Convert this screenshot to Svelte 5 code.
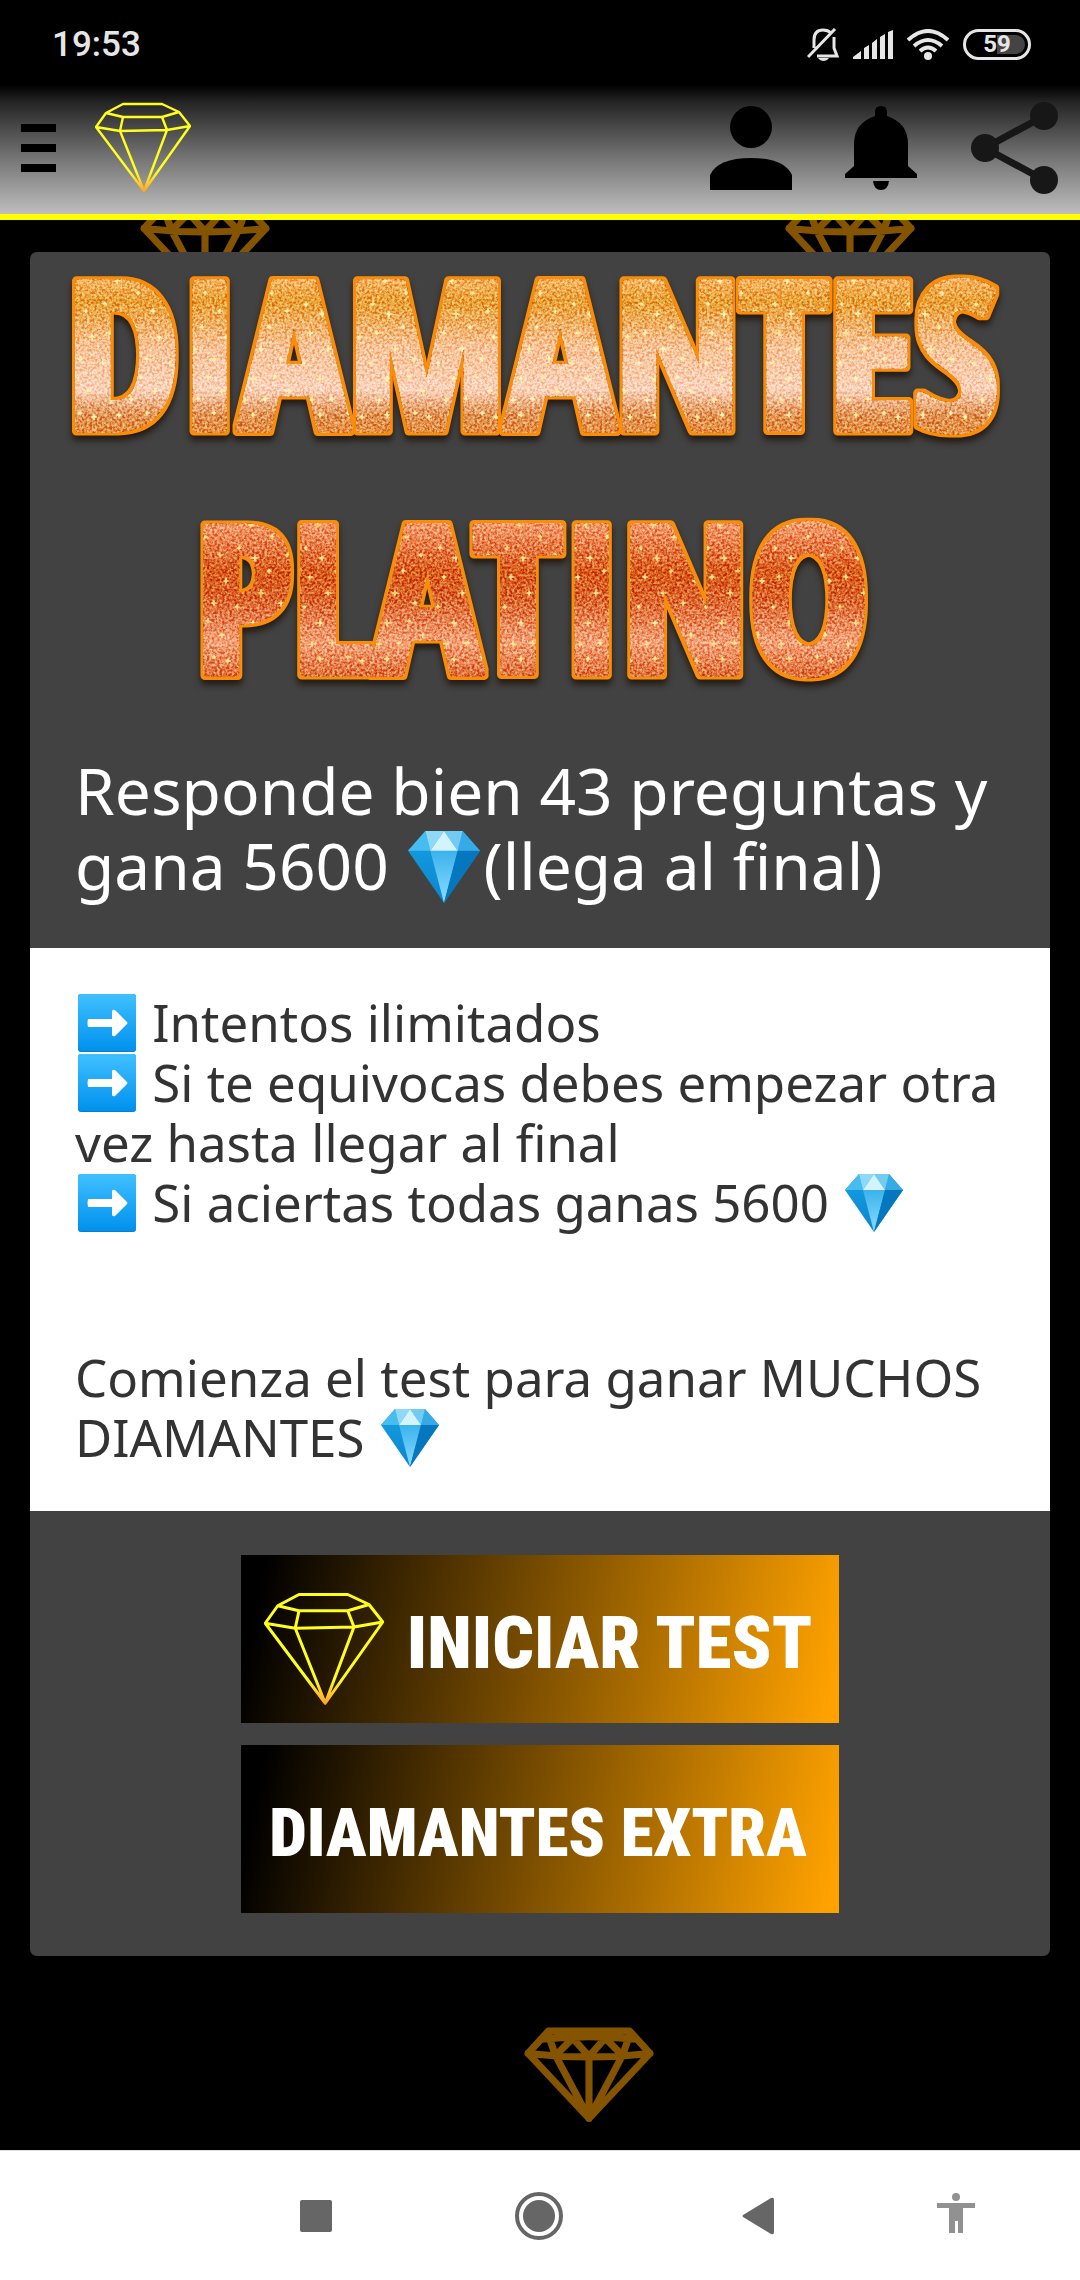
<script>
  const rules = [
    { text: 'Intentos ilimitados', gem: false },
    { text: 'Si te equivocas debes empezar otra vez hasta llegar al final', gem: false },
    { text: 'Si aciertas todas ganas 5600', gem: true }
  ];
  const sparks = [
    [20, 14, 4], [54, 8, 3], [41, 26, 3], [8, 37, 3], [24, 47, 5], [56, 44, 3], [38, 60, 3],
    [12, 66, 4], [62, 70, 4], [30, 82, 5], [50, 92, 4], [6, 96, 3], [22, 112, 5], [44, 110, 3],
    [58, 124, 4], [14, 133, 4], [34, 132, 4], [50, 146, 3], [22, 148, 4], [64, 150, 4]
  ];
  const spark = ([x, y, r]) =>
    `M${x} ${y - r}L${x + 1} ${y - 1}L${x + r} ${y}L${x + 1} ${y + 1}L${x} ${y + r}L${x - 1} ${y + 1}L${x - r} ${y}L${x - 1} ${y - 1}Z`;
</script>

{#snippet gem()}
  <svg class="emoji" viewBox="0 0 58 58" role="img" aria-label="diamante">
    <defs>
      <linearGradient id="gemBody" x1="0" y1="0" x2="0" y2="1">
        <stop offset="0" stop-color="#169ee2" /><stop offset="1" stop-color="#0a86d0" />
      </linearGradient>
      <linearGradient id="gemFace" x1="0" y1="0" x2="0" y2="1">
        <stop offset="0" stop-color="#3bb2ec" /><stop offset="1" stop-color="#8bdcff" />
      </linearGradient>
    </defs>
    <path d="M14 0H44L58 16L29 58L0 16Z" fill="url(#gemBody)" />
    <path d="M18 16H40L29 58Z" fill="url(#gemFace)" />
    <path d="M40 16H58L29 58Z" fill="#0577bf" />
    <path d="M14 0L0 16H18Z" fill="#46bcf1" />
    <path d="M44 0L58 16H40Z" fill="#35aae5" />
    <path d="M14 0H29L18 16Z" fill="#8ed9f8" />
    <path d="M44 0H29L40 16Z" fill="#72cbf2" />
    <path d="M29 0L40 16H18Z" fill="#d3f3fd" />
  </svg>
{/snippet}

{#snippet arrow()}
  <svg class="emoji" viewBox="0 0 58 58" role="img" aria-label="flecha">
    <defs>
      <linearGradient id="arrowTile" x1="0" y1="0" x2="0" y2="1">
        <stop offset="0" stop-color="#40c0ff" /><stop offset="1" stop-color="#0091ee" />
      </linearGradient>
    </defs>
    <rect width="58" height="58" rx="3" fill="#0b7cc6" />
    <rect width="58" height="57" rx="3" fill="url(#arrowTile)" />
    <path d="M10 25H34V17Q35 15 37 16L49 28Q50 29 49 30L37 42Q35 43 34 41V33H10Q9 29 10 25Z" fill="#fff" />
  </svg>
{/snippet}

{#snippet logo()}
  <svg viewBox="0 0 96 91" aria-hidden="true">
    <defs>
      <linearGradient id="logoLine" gradientUnits="userSpaceOnUse" x1="0" y1="70" x2="0" y2="90">
        <stop offset="0" stop-color="#ffff1e" /><stop offset="1" stop-color="#ff9d2e" />
      </linearGradient>
    </defs>
    <path
      d="M28 2H67L84 10L95 24L49 89L1 25L11 11ZM11 11L28 15H67L84 10M28 15L25 29L72 28L67 15M1 25L25 29L49 89L72 28L95 24"
      fill="none" stroke="url(#logoLine)" stroke-width="2.4" stroke-linejoin="round" />
  </svg>
{/snippet}

{#snippet wallGem()}
  <path
    d="M24 4H104L124 26L64 90L4 26ZM17 12Q64 7 111 12M4 26Q64 33 124 26M24 8L31 28L48 11L64 29L80 11L97 28L104 8M31 28L64 90L97 28M64 29V90"
    fill="none" stroke="#855400" stroke-width="7" stroke-linejoin="round" stroke-linecap="round" />
{/snippet}

<div class="screen">
  <div class="status">
    <time>19:53</time>
    <div class="indicators">
      <svg width="32" height="33" viewBox="0 0 32 33" aria-hidden="true">
        <g fill="none" stroke="#e6e6e6" stroke-width="3">
          <path d="M7 20V12Q7 2 16 2Q21 2 24 5M27 9V20L30 28H10M1 29L28 1" />
        </g>
        <path d="M11 30H22Q20 33 16 33Q13 33 11 30Z" fill="#e6e6e6" />
      </svg>
      <svg width="40" height="30" viewBox="0 0 40 30" aria-hidden="true" fill="#e6e6e6">
        <path d="M0 27L8 21V29H0ZM11 18L16 15V29H11ZM19 13L24 9V29H19ZM27 7L32 4V29H27ZM35 2L40 0V29H35Z" />
      </svg>
      <svg width="42" height="31" viewBox="0 0 42 31" aria-hidden="true">
        <g fill="none" stroke="#e6e6e6" stroke-width="4">
          <path d="M1 11Q21 -7 41 11M7 17Q21 5 35 17M13 22Q21 15 29 22" />
        </g>
        <circle cx="21" cy="27" r="4" fill="#e6e6e6" />
      </svg>
      <span class="battery">59</span>
    </div>
  </div>

  <header>
    <button class="menu" aria-label="Menú"><i></i><i></i><i></i></button>
    <a class="brand" href="#inicio" aria-label="Inicio">{@render logo()}</a>
    <nav class="tools" aria-label="Accesos">
      <button aria-label="Perfil">
        <svg width="82" height="84" viewBox="0 0 82 84" aria-hidden="true">
          <circle cx="41" cy="21" r="21" /><path d="M0 84V69Q8 52 41 52Q74 52 82 69V84Z" />
        </svg>
      </button>
      <button aria-label="Notificaciones">
        <svg width="72" height="84" viewBox="0 0 72 84" aria-hidden="true">
          <path d="M30 6Q30 0 36 0Q42 0 42 6V10Q63 17 63 38V60L72 68V72H0V68L9 60V38Q9 17 30 10ZM28 75H44Q43 84 36 84Q29 84 28 75Z" />
        </svg>
      </button>
      <button aria-label="Compartir">
        <svg width="89" height="94" viewBox="0 0 89 94" aria-hidden="true">
          <path d="M74 15L15 47L74 79" fill="none" stroke="#171717" stroke-width="7" />
          <g fill="#171717"><circle cx="74" cy="15" r="14" /><circle cx="15" cy="47" r="14" /><circle cx="74" cy="79" r="14" /></g>
        </svg>
      </button>
    </nav>
  </header>

  <main>
    <svg class="wall first" viewBox="0 0 128 94" aria-hidden="true">{@render wallGem()}</svg>
    <svg class="wall second" viewBox="0 0 128 94" aria-hidden="true">{@render wallGem()}</svg>
    <svg class="wall third" viewBox="0 0 128 94" aria-hidden="true">{@render wallGem()}</svg>

    <article>
      <h1>
        <svg viewBox="0 0 1020 500">
          <defs>
            <linearGradient id="gold" x1="0" y1="0" x2="0" y2="1">
              <stop offset="0" stop-color="#ffc27c" /><stop offset="0.2" stop-color="#e9a232" />
              <stop offset="0.45" stop-color="#f8c496" /><stop offset="0.7" stop-color="#fbd4bc" />
              <stop offset="0.85" stop-color="#e29450" /><stop offset="1" stop-color="#e88f38" />
            </linearGradient>
            <linearGradient id="copper" x1="0" y1="0" x2="0" y2="1">
              <stop offset="0" stop-color="#fcae80" /><stop offset="0.35" stop-color="#da5a18" />
              <stop offset="0.5" stop-color="#dc6428" /><stop offset="0.75" stop-color="#f5a478" />
              <stop offset="1" stop-color="#da6020" />
            </linearGradient>
            <pattern id="goldFill" patternUnits="userSpaceOnUse" x="0" y="15" width="67" height="175">
              <rect width="67" height="175" fill="url(#gold)" />
              {#each sparks as s}<path d={spark(s)} fill="#fff3b0" />{/each}
            </pattern>
            <pattern id="copperFill" patternUnits="userSpaceOnUse" x="0" y="259" width="67" height="175">
              <rect width="67" height="175" fill="url(#copper)" />
              {#each sparks as s}<path d={spark(s)} fill="#ffe48c" />{/each}
            </pattern>
            <filter id="glitter" filterUnits="userSpaceOnUse" x="0" y="0" width="1020" height="500" color-interpolation-filters="sRGB">
              <feTurbulence type="fractalNoise" baseFrequency="0.4" numOctaves="2" seed="4" />
              <feColorMatrix values="1.7 1.7 0 0 -1.2  1.7 1.7 0 0 -1.2  1.7 1.7 0 0 -1.2  0 0 0 0 1" result="grain" />
              <feBlend in="grain" in2="SourceGraphic" mode="soft-light" />
              <feComposite in2="SourceAlpha" operator="in" result="face" />
              <feMorphology in="SourceAlpha" operator="dilate" radius="3" result="wide" />
              <feFlood flood-color="#fb8c08" />
              <feComposite in2="wide" operator="in" result="edge" />
              <feGaussianBlur in="wide" stdDeviation="3" />
              <feOffset dy="5" result="shade" />
              <feFlood flood-color="#1c1208" flood-opacity="0.8" />
              <feComposite in2="shade" operator="in" result="shadow" />
              <feMerge>
                <feMergeNode in="shadow" /><feMergeNode in="edge" /><feMergeNode in="face" />
              </feMerge>
            </filter>
          </defs>
          <g class="title" filter="url(#glitter)">
            <text x="502" y="176" fill="url(#goldFill)" stroke="url(#goldFill)">DIAMANTES</text>
            <text x="502" y="420" fill="url(#copperFill)" stroke="url(#copperFill)">PLATINO</text>
          </g>
        </svg>
      </h1>
      <h2>Responde bien 43 preguntas y gana 5600 {@render gem()}(llega al final)</h2>

      <section>
        <ul>
          {#each rules as rule}
            <li>
              {@render arrow()}
              {rule.text}
              {#if rule.gem}{@render gem()}{/if}
            </li>
          {/each}
        </ul>
        <p>Comienza el test para ganar MUCHOS DIAMANTES {@render gem()}</p>
      </section>

      <div class="actions">
        <button class="start">{@render logo()}<span>INICIAR TEST</span></button>
        <button class="extra">DIAMANTES EXTRA</button>
      </div>
    </article>
  </main>

  <nav class="system" aria-label="Sistema">
    <button aria-label="Recientes">
      <svg width="50" height="50" viewBox="0 0 50 50" aria-hidden="true"><rect x="9" y="9" width="32" height="32" rx="2" fill="#666" /></svg>
    </button>
    <button aria-label="Inicio">
      <svg width="50" height="50" viewBox="0 0 50 50" aria-hidden="true">
        <circle cx="25" cy="25" r="22" fill="none" stroke="#666" stroke-width="4" /><circle cx="25" cy="25" r="16" fill="#666" />
      </svg>
    </button>
    <button aria-label="Atrás">
      <svg width="50" height="50" viewBox="0 0 50 50" aria-hidden="true"><path d="M10 24L38 7Q41 6 41 9V41Q41 44 38 43L10 26Q9 25 10 24Z" fill="#666" /></svg>
    </button>
    <button aria-label="Accesibilidad">
      <svg width="50" height="50" viewBox="0 0 50 50" aria-hidden="true" fill="#919191">
        <circle cx="25" cy="6" r="4" /><path d="M6 12H44V17H32V42H27V30H24V42H18V17H6Z" />
      </svg>
    </button>
  </nav>
</div>

<style>
  :global(body) { margin: 0; background: #000; }
  .screen { display: flex; flex-direction: column; min-height: 100vh; font-family: "Noto Sans", sans-serif; background: #000; }
  button { padding: 0; border: 0; background: none; color: inherit; cursor: pointer; }
  svg { display: block; flex: none; }

  .status { display: flex; justify-content: space-between; align-items: center; height: 85px; padding: 4px 49px 0 52px; box-sizing: border-box; }
  time { color: #e6e6e6; font: 500 35px/40px Roboto, sans-serif; }
  .indicators { display: flex; align-items: center; gap: 14px; }
  .battery {
    width: 68px; height: 31px; box-sizing: border-box; border: 3px solid #e6e6e6; border-radius: 16px;
    background: linear-gradient(90deg, #000 50%, #444 50%) content-box; padding: 3px;
    color: #e6e6e6; font: 700 24px/19px Roboto, sans-serif; text-align: center;
  }

  header {
    display: flex; align-items: center; height: 125px; padding: 0 21px 4px;
    background: linear-gradient(#000, #262626 14%, #757575 57%, #bebebe); border-bottom: 6px solid #ff0;
  }
  .menu { display: flex; flex-direction: column; gap: 12px; width: 35px; }
  .menu i { height: 8px; background: #000; }
  .brand { width: 96px; margin-left: 39px; }
  .tools { display: flex; align-items: center; gap: 53px; margin-left: auto; }

  main { position: relative; flex: 1; padding: 32px 30px 194px; overflow: hidden; }
  .wall { position: absolute; width: 130px; }
  .first { top: -18px; left: 13%; }
  .second { top: -18px; right: 165px; }
  .third { bottom: 28px; left: 524px; }

  article { position: relative; background: #424242; border-radius: 7px; overflow: hidden; }
  h1, h2, ul, p { margin: 0; font-weight: 400; }
  h1 svg { width: 100%; height: auto; }
  .title { font: 700 202px "Open Sans Condensed", "Roboto Condensed", sans-serif; text-anchor: middle; stroke-width: 9px; stroke-linejoin: round; }
  h2 { padding: 1px 45px 45px; color: #fff; font-size: 64px; line-height: 75px; }
  section { padding: 44px 45px; background: #fff; color: #333; font-size: 51px; line-height: 60px; }
  ul { padding: 0; list-style: none; }
  p { margin-top: 115px; }
  .emoji { display: inline-block; width: 58px; height: 58px; margin: 0 3px; vertical-align: -10px; }
  h2 .emoji { width: 72px; height: 72px; vertical-align: -13px; }

  .actions { display: flex; flex-direction: column; align-items: center; gap: 22px; padding: 44px 45px 43px; }
  .actions button {
    display: flex; align-items: center; justify-content: center; gap: 23px; width: 598px; max-width: 100%; height: 168px;
    box-sizing: border-box; padding: 8px 4px 0 0;
    background: linear-gradient(102deg, #000 4%, #ffa200 98%);
    color: #fff; font-family: "Roboto Condensed", "Open Sans Condensed", sans-serif; font-weight: 900; white-space: nowrap;
  }
  .actions svg { width: 120px; margin-top: 12px; }
  .actions .start { font-size: 73px; }
  .actions .extra { font-size: 67px; }

  .system {
    display: grid; grid-template-columns: 222fr 226fr 214fr 184fr; align-items: center; height: 129px;
    padding: 0 3% 0 19%; background: #fff; border-top: 1px solid #e0e0e0;
  }
  .system button { display: flex; justify-content: center; }
</style>
